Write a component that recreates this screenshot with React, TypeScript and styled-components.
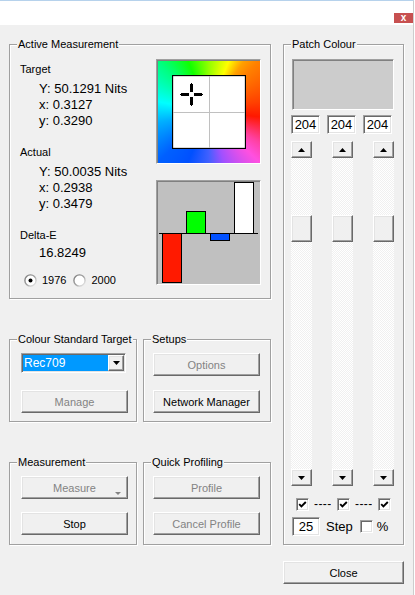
import React from 'react';
import styled, { createGlobalStyle, css } from 'styled-components';

const GlobalStyle = createGlobalStyle`
  *, *::before, *::after { box-sizing: border-box; }
  html, body { margin: 0; padding: 0; background: #ffffff; }
  body { font-family: "Liberation Sans", Arial, sans-serif; font-size: 11px; color: #000; }
`;

const raised = css`
  border: 1px solid;
  border-color: #ffffff #696969 #696969 #ffffff;
  box-shadow: inset -1px -1px 0 #a0a0a0, inset 1px 1px 0 #e3e3e3;
  background-color: #f0f0f0;
`;

const sunken = css`
  border: 1px solid;
  border-color: #a0a0a0 #ffffff #ffffff #a0a0a0;
  box-shadow: inset 1px 1px 0 #696969, inset -1px -1px 0 #e3e3e3;
`;

const Window = styled.div`
  width: 414px;
  height: 595px;
  border-top: 1px solid #b6d2ec;
  border-right: 1px solid #cdcdcd;
  background: #f0f0f0;
  display: flex;
  flex-direction: column;
  overflow: hidden;
`;

const TitleBar = styled.div`
  flex: none;
  height: 24px;
  background: #ffffff;
  display: flex;
  justify-content: flex-end;
  align-items: flex-start;
  padding-top: 12px;
`;

const CloseGlyph = styled.div`
  width: 19px;
  height: 10px;
  background: #c75050;
  color: #ffffff;
  font: bold 10px "Liberation Sans", Arial, sans-serif;
  line-height: 9px;
  text-align: center;
`;

const Body = styled.div`
  flex: 1;
  display: flex;
  gap: 12px;
  padding: 19px 0 0 9px;
`;

const LeftCol = styled.div`
  width: 262px;
  display: flex;
  flex-direction: column;
  gap: 40px;
`;

const RightCol = styled.div`
  width: 121px;
  display: flex;
  flex-direction: column;
`;

const Row = styled.div`
  display: flex;
  gap: 6px;
`;

const Group = styled.div<{ $w: number; $h: number }>`
  flex: none;
  width: ${p => p.$w}px;
  height: ${p => p.$h}px;
  border: 1px solid #a0a0a0;
  box-shadow: inset 1px 1px 0 #ffffff, 1px 1px 0 #ffffff;
  display: flex;
  flex-direction: column;
`;

const Legend = styled.div`
  align-self: flex-start;
  margin: -7px 0 0 7px;
  padding: 0 1px;
  height: 13px;
  line-height: 13px;
  background: #f0f0f0;
  white-space: nowrap;
`;

const MeasureBody = styled.div`
  display: flex;
  justify-content: space-between;
  padding: 0 9px 0 10px;
`;

const Readings = styled.div`
  margin-top: 10px;
  display: flex;
  flex-direction: column;
`;

const Label = styled.div<{ $gap?: number }>`
  line-height: 16px;
  height: 16px;
  margin-top: ${p => p.$gap ?? 0}px;
  white-space: nowrap;
`;

const Values = styled.div<{ $gap?: number }>`
  font-size: 13px;
  line-height: 16px;
  padding-left: 19px;
  margin-top: ${p => p.$gap ?? 4}px;
  white-space: nowrap;
`;

const RadioRow = styled.div`
  display: flex;
  align-items: center;
  height: 16px;
  margin-top: 11px;
  padding-left: 4px;
`;

const RadioItem = styled.label`
  display: flex;
  align-items: center;
  gap: 5px;
  margin-right: 7px;
`;

const Charts = styled.div`
  margin-top: 8px;
  display: flex;
  flex-direction: column;
  gap: 16px;
`;

const chartFrame = css`
  width: 105px;
  height: 105px;
  border: 1px solid;
  border-color: #a0a0a0 #ffffff #ffffff #a0a0a0;
  box-shadow: inset 1px 1px 0 #808080;
`;

const Wheel = styled.div`
  ${chartFrame};
  display: flex;
  align-items: center;
  justify-content: center;
  background: conic-gradient(
    #90ff00 0deg,
    #ffff00 22deg,
    #ffa000 35deg,
    #ff8000 45deg,
    #ff4000 79deg,
    #ff1800 96deg,
    #ff40a0 121deg,
    #ff50e0 135deg,
    #a050ff 163deg,
    #4060ff 180deg,
    #0050ff 202deg,
    #0060ff 225deg,
    #00b0ff 258deg,
    #00ffff 281deg,
    #00ff80 315deg,
    #10ff00 338deg,
    #90ff00 360deg
  );
`;

const BarChart = styled.div`
  ${chartFrame};
  background: #c0c0c0;
  svg { display: block; }
`;

const PatchBody = styled.div`
  display: flex;
  flex-direction: column;
  padding-left: 7px;
  margin-top: 8px;
`;

const Swatch = styled.div`
  margin-left: 1px;
  width: 102px;
  height: 51px;
  background: #cccccc;
  border: 1px solid;
  border-color: #a0a0a0 #ffffff #ffffff #a0a0a0;
  box-shadow: inset 1px 1px 0 #808080;
`;

const InputRow = styled.div`
  margin-top: 5px;
  display: flex;
  gap: 7px;
`;

const NumBox = styled.div<{ $w?: number }>`
  width: ${p => p.$w ?? 29}px;
  height: 19px;
  background: #ffffff;
  ${sunken};
  font-size: 13px;
  line-height: 17px;
  text-align: center;
`;

const ScrollRow = styled.div`
  margin-top: 7px;
  height: 345px;
  display: flex;
  gap: 20px;
`;

const ScrollBar = styled.div`
  width: 21px;
  display: flex;
  flex-direction: column;
  background-color: #f8f8f8;
  background-image: repeating-conic-gradient(#ffffff 0% 25%, #f0f0f0 0% 50%);
  background-size: 2px 2px;
`;

const ArrowBtn = styled.div`
  flex: none;
  height: 17px;
  ${raised};
  display: flex;
  align-items: center;
  justify-content: center;
`;

const Track = styled.div`
  flex: 1;
  display: flex;
  flex-direction: column;
`;

const Thumb = styled.div`
  flex: none;
  height: 27px;
  ${raised};
`;

const CheckRow = styled.div`
  margin-top: 12px;
  height: 13px;
  display: flex;
  align-items: center;
  padding-left: 5px;
`;

const Dash = styled.span`
  display: inline-block;
  width: 17px;
  margin: 0 6px 0 5px;
  font-size: 12px;
  line-height: 13px;
  letter-spacing: 0.4px;
  overflow: hidden;
  white-space: nowrap;
`;

const StepRow = styled.div`
  margin-top: 6px;
  height: 19px;
  display: flex;
  align-items: center;
  padding-left: 1px;
`;

const StepText = styled.span<{ $ml: number; $mr: number }>`
  font-size: 13px;
  margin-left: ${p => p.$ml}px;
  margin-right: ${p => p.$mr}px;
`;

const BoxCheck = styled.span`
  flex: none;
  width: 13px;
  height: 13px;
  background: #ffffff;
  ${sunken};
  display: flex;
  align-items: center;
  justify-content: center;
`;

const GroupButtons = styled.div<{ $pl: number; $gap: number }>`
  display: flex;
  flex-direction: column;
  padding-left: ${p => p.$pl}px;
  margin-top: 7px;
  gap: ${p => p.$gap}px;
`;

const Btn = styled.button<{ $w?: number }>`
  position: relative;
  flex: none;
  width: ${p => p.$w ?? 107}px;
  height: 23px;
  padding: 0;
  font: 11px "Liberation Sans", Arial, sans-serif;
  color: #000;
  ${raised};
  &:disabled { color: #838383; }
`;

const SplitArrow = styled.span`
  position: absolute;
  right: 6px;
  top: 15px;
  width: 0;
  height: 0;
  border-left: 3px solid transparent;
  border-right: 3px solid transparent;
  border-top: 3px solid #838383;
`;

const CloseBtn = styled(Btn)`
  margin-top: 16px;
`;

const Combo = styled.div`
  width: 105px;
  height: 20px;
  display: flex;
  background: #ffffff;
  padding: 1px;
  ${sunken};
`;

const ComboText = styled.div`
  flex: 1;
  background: #0099ff;
  color: #ffffff;
  font-size: 12px;
  line-height: 16px;
  padding-left: 1px;
`;

const ComboBtn = styled.div`
  width: 16px;
  ${raised};
  display: flex;
  align-items: center;
  justify-content: center;
`;

const Tri = ({ dir }: { dir: 'up' | 'down' }) => (
  <svg width="7" height="4" viewBox="0 0 7 4">
    {dir === 'up' ? <polygon points="3.5,0 7,4 0,4" fill="#000" /> : <polygon points="0,0 7,0 3.5,4" fill="#000" />}
  </svg>
);

const Radio = ({ checked }: { checked?: boolean }) => (
  <svg width="13" height="13" viewBox="0 0 13 13">
    <defs>
      <linearGradient id={checked ? 'rg1' : 'rg2'} x1="0" y1="0" x2="1" y2="1">
        <stop offset="0" stopColor="#7a7a7a" />
        <stop offset="0.5" stopColor="#a0a0a0" />
        <stop offset="1" stopColor="#f4f4f4" />
      </linearGradient>
    </defs>
    <circle cx="6.5" cy="6.5" r="5.6" fill="#ffffff" stroke={`url(#${checked ? 'rg1' : 'rg2'})`} strokeWidth="1.4" />
    {checked && <circle cx="6.5" cy="6.5" r="2" fill="#000" />}
  </svg>
);

const Check = ({ on }: { on?: boolean }) => (
  <BoxCheck>
    {on && (
      <svg width="9" height="9" viewBox="0 0 9 9">
        <polyline points="1.2,4.2 3.4,6.4 7.8,2" fill="none" stroke="#000" strokeWidth="1.9" />
      </svg>
    )}
  </BoxCheck>
);

const TRACK = 345 - 34;
const THUMB = 27;

const ScrollColumn = ({ value }: { value: number }) => {
  const offset = Math.round(((255 - value) / 255) * (TRACK - THUMB));
  return (
    <ScrollBar>
      <ArrowBtn><Tri dir="up" /></ArrowBtn>
      <Track>
        <Thumb style={{ marginTop: offset }} />
      </Track>
      <ArrowBtn><Tri dir="down" /></ArrowBtn>
    </ScrollBar>
  );
};

const channels = [204, 204, 204];

export default function App() {
  return (
    <>
      <GlobalStyle />
      <Window>
        <TitleBar>
          <CloseGlyph>x</CloseGlyph>
        </TitleBar>
        <Body>
          <LeftCol>
            <Group $w={262} $h={255}>
              <Legend>Active Measurement</Legend>
              <MeasureBody>
                <Readings>
                  <Label>Target</Label>
                  <Values>
                    <div>Y: 50.1291 Nits</div>
                    <div>x: 0.3127</div>
                    <div>y: 0.3290</div>
                  </Values>
                  <Label $gap={15}>Actual</Label>
                  <Values>
                    <div>Y: 50.0035 Nits</div>
                    <div>x: 0.2938</div>
                    <div>y: 0.3479</div>
                  </Values>
                  <Label $gap={15}>Delta-E</Label>
                  <Values $gap={2}>16.8249</Values>
                  <RadioRow>
                    <RadioItem><Radio checked />1976</RadioItem>
                    <RadioItem><Radio />2000</RadioItem>
                  </RadioRow>
                </Readings>
                <Charts>
                  <Wheel>
                    <svg width="74" height="74" viewBox="0 0 74 74">
                      <rect x="0.5" y="0.5" width="73" height="73" fill="#ffffff" stroke="#000" strokeWidth="1.3" />
                      <line x1="37.5" y1="1" x2="37.5" y2="73" stroke="#c0c0c0" />
                      <line x1="1" y1="37.5" x2="73" y2="37.5" stroke="#c0c0c0" />
                      <g fill="#000">
                        <rect x="9" y="18" width="8" height="3" />
                        <rect x="8" y="19" width="1" height="1" />
                        <rect x="22" y="18" width="8" height="3" />
                        <rect x="30" y="19" width="1" height="1" />
                        <rect x="18" y="9" width="3" height="8" />
                        <rect x="19" y="8" width="1" height="1" />
                        <rect x="18" y="22" width="3" height="8" />
                        <rect x="19" y="30" width="1" height="1" />
                      </g>
                    </svg>
                  </Wheel>
                  <BarChart>
                    <svg width="103" height="103" viewBox="0 0 103 103">
                      <line x1="2" y1="52.5" x2="101" y2="52.5" stroke="#000" />
                      <rect x="5.5" y="52.5" width="19" height="49" fill="#ff1a00" stroke="#000" />
                      <rect x="29.5" y="30.5" width="19" height="22" fill="#00ff00" stroke="#000" />
                      <rect x="53.5" y="52.5" width="19" height="7" fill="#0050ff" stroke="#000" />
                      <rect x="77.5" y="1.5" width="19" height="51" fill="#ffffff" stroke="#000" />
                    </svg>
                  </BarChart>
                </Charts>
              </MeasureBody>
            </Group>

            <Row>
              <Group $w={128} $h={83}>
                <Legend>Colour Standard Target</Legend>
                <GroupButtons $pl={11} $gap={17}>
                  <Combo>
                    <ComboText>Rec709</ComboText>
                    <ComboBtn><Tri dir="down" /></ComboBtn>
                  </Combo>
                  <Btn disabled>Manage</Btn>
                </GroupButtons>
              </Group>
              <Group $w={128} $h={83}>
                <Legend>Setups</Legend>
                <GroupButtons $pl={9} $gap={14}>
                  <Btn disabled>Options</Btn>
                  <Btn>Network Manager</Btn>
                </GroupButtons>
              </Group>
            </Row>

            <Row>
              <Group $w={128} $h={83}>
                <Legend>Measurement</Legend>
                <GroupButtons $pl={11} $gap={13}>
                  <Btn disabled>Measure<SplitArrow /></Btn>
                  <Btn>Stop</Btn>
                </GroupButtons>
              </Group>
              <Group $w={128} $h={83}>
                <Legend>Quick Profiling</Legend>
                <GroupButtons $pl={9} $gap={13}>
                  <Btn disabled>Profile</Btn>
                  <Btn disabled>Cancel Profile</Btn>
                </GroupButtons>
              </Group>
            </Row>
          </LeftCol>

          <RightCol>
            <Group $w={121} $h={501}>
              <Legend>Patch Colour</Legend>
              <PatchBody>
                <Swatch />
                <InputRow>
                  {channels.map((c, i) => (
                    <NumBox key={i}>{c}</NumBox>
                  ))}
                </InputRow>
                <ScrollRow>
                  {channels.map((c, i) => (
                    <ScrollColumn key={i} value={c} />
                  ))}
                </ScrollRow>
                <CheckRow>
                  <Check on />
                  <Dash>----</Dash>
                  <Check on />
                  <Dash>----</Dash>
                  <Check on />
                </CheckRow>
                <StepRow>
                  <NumBox $w={28}>25</NumBox>
                  <StepText $ml={6} $mr={7}>Step</StepText>
                  <Check />
                  <StepText $ml={4} $mr={0}>%</StepText>
                </StepRow>
              </PatchBody>
            </Group>
            <CloseBtn $w={121}>Close</CloseBtn>
          </RightCol>
        </Body>
      </Window>
    </>
  );
}
